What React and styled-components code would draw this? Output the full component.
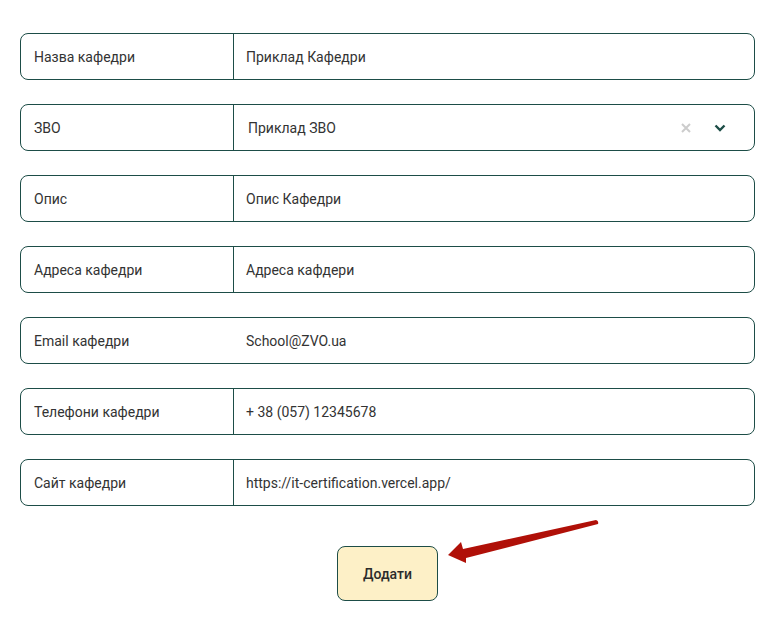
import React from 'react';
import styled, { createGlobalStyle } from 'styled-components';

const GlobalStyle = createGlobalStyle`
    body {
        margin: 0;
        background: #ffffff;
        font-family: Roboto, "Liberation Sans", sans-serif;
        color: #2b2b2b;
    }
`;

const Form = styled.form`
    display: flex;
    flex-direction: column;
    gap: 24px;
    padding: 33px 23px 0 20px;
`;

const Row = styled.div`
    display: flex;
    height: 47px;
    box-sizing: border-box;
    border: 1px solid #1d4d47;
    border-radius: 8px;
    font-size: 14px;
`;

const Label = styled.div`
    width: 213px;
    flex-shrink: 0;
    display: flex;
    align-items: center;
    padding-left: 13px;
    box-sizing: border-box;
    border-right: 1px solid ${(p) => (p.$noDivider ? 'transparent' : '#1d4d47')};
    color: #333333;
`;

const Value = styled.div`
    flex: 1;
    display: flex;
    align-items: center;
    padding-left: ${(p) => (p.$select ? '14px' : '12px')};
    color: #333333;
`;

const SelectIcons = styled.div`
    display: flex;
    align-items: center;
    gap: 23px;
    margin-left: auto;
    padding-right: 28px;
`;

const Footer = styled.div`
    position: relative;
    display: flex;
    justify-content: center;
    padding-top: 16px;
`;

const Button = styled.button`
    width: 101px;
    height: 55px;
    background: #fdf0c7;
    border: 1px solid #1d4d47;
    border-radius: 8px;
    font-family: Roboto, "Liberation Sans", sans-serif;
    font-size: 14px;
    font-weight: 500;
    color: #2b2b2b;
    cursor: pointer;
`;

const Arrow = styled.svg`
    position: absolute;
    left: 420px;
    top: -20px;
`;

const rows = [
    ['Назва кафедри', 'Приклад Кафедри'],
    ['ЗВО', 'Приклад ЗВО', 'select'],
    ['Опис', 'Опис Кафедри'],
    ['Адреса кафедри', 'Адреса кафдери'],
    ['Email кафедри', 'School@ZVO.ua', 'nodiv'],
    ['Телефони кафедри', '+ 38 (057) 12345678'],
    ['Сайт кафедри', 'https://it-certification.vercel.app/'],
];

export default function App() {
    return (
        <>
            <GlobalStyle />
            <Form onSubmit={(e) => e.preventDefault()}>
                {rows.map(([label, value, kind]) => (
                    <Row key={label}>
                        <Label $noDivider={kind === 'nodiv'}>{label}</Label>
                        <Value $select={kind === 'select'}>
                            {value}
                            {kind === 'select' && (
                                <SelectIcons>
                                    <svg width="10" height="10" viewBox="0 0 10 10">
                                        <path d="M1 1L9 9M9 1L1 9" stroke="#cccccc" strokeWidth="2" />
                                    </svg>
                                    <svg width="12" height="8" viewBox="0 0 12 8">
                                        <path d="M1.5 1.5L6 6L10.5 1.5" stroke="#1d4d47" strokeWidth="2.4" fill="none" />
                                    </svg>
                                </SelectIcons>
                            )}
                        </Value>
                    </Row>
                ))}
                <Footer>
                    <Button type="submit">Додати</Button>
                    <Arrow width="170" height="60" viewBox="0 0 170 60">
                        <path
                            d="M8 45L21 32L23 39L156 10Q159 11 158 14L26 48L26 53Z"
                            fill="#b01008"
                            strokeLinejoin="round"
                        />
                    </Arrow>
                </Footer>
            </Form>
        </>
    );
}
